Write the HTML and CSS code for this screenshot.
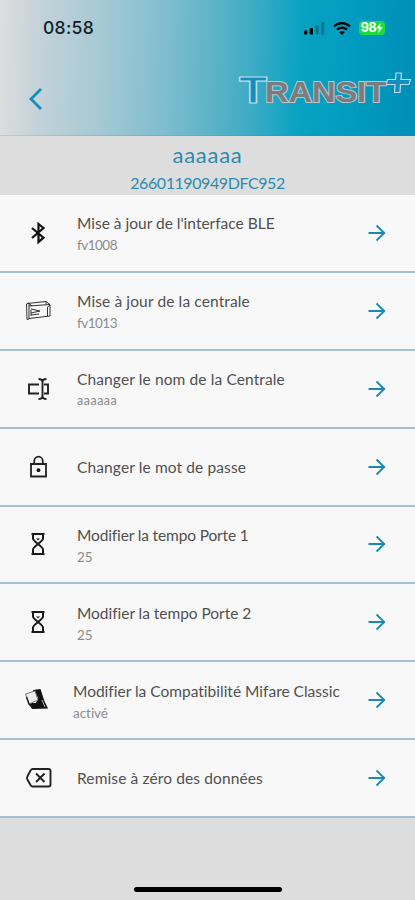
FILE: index.html
```html
<!DOCTYPE html>
<html lang="fr">
<head>
<meta charset="utf-8">
<meta name="viewport" content="width=device-width, initial-scale=1">
<title>Transit+</title>
<link rel="stylesheet" href="styles.css">
</head>
<body>
<svg width="0" height="0" class="defs" aria-hidden="true">
  <symbol id="arrow" viewBox="0 0 18 18"><path d="M.5 9H16M8.500 1.500L16.300 9L8.500 16.500" fill="none" stroke="currentColor" stroke-width="1.8"/></symbol>
  <symbol id="hourglass" viewBox="0 0 28 28"><path d="M7.500 4H20.500M7.500 24H20.500M9 4V8.500Q9 10 14 14Q19 18 19 19.500V24M19 4V8.500Q19 10 14 14Q9 18 9 19.500V24" fill="none" stroke="currentColor" stroke-width="2"/><path d="M12 8.500H16L14 10.600Z" fill="currentColor"/></symbol>
</svg>
<div class="screen">
  <header class="header">
    <div class="status">
      <span class="time">08:58</span>
      <div class="indicators">
        <svg width="21" height="13" viewBox="0 0 21 13"><rect x="0" y="8.5" width="3.3" height="4" rx="1"/><rect x="5.7" y="6" width="3.3" height="6.5" rx="1"/><g opacity=".25"><rect x="11.4" y="3" width="3.3" height="9.5" rx="1"/><rect x="17" y="0" width="3.3" height="12.5" rx="1"/></g></svg>
        <svg class="wifi" width="18" height="13" viewBox="0 0 18 13"><g fill="none" stroke="#000" stroke-width="2.3"><path d="M1 4.4Q9-2.2 17 4.4"/><path d="M4 7.7Q9 3.6 14 7.7"/></g><path d="M6.2 10Q9 8 11.8 10L9 13Z"/></svg>
        <span class="battery">98<svg width="7" height="10" viewBox="0 0 7 10"><path d="M4.7 0L0 5.5H3L2.2 10L7 4.3H4Z" fill="#fff"/></svg></span>
      </div>
    </div>
    <div class="nav">
      <svg class="back" width="16" height="24" viewBox="0 0 16 24"><path d="M13 2L3 12L13 22" fill="none" stroke="#178dbb" stroke-width="2.8"/></svg>
      <svg class="logo" width="177" height="40" viewBox="0 0 177 40">
        <g class="logo-blue">
          <text x="1" y="34.500" font-size="37" textLength="28" lengthAdjust="spacingAndGlyphs">T</text>
          <path d="M158 5H163.500L163 11.500H172.500L171 16.500H162.500L162 24.500H156.500L157 16.500H148L149.500 11.500H157.500Z"/>
        </g>
        <text class="logo-grey" x="27" y="34" font-size="30" textLength="121" lengthAdjust="spacingAndGlyphs">RANSIT</text>
      </svg>
    </div>
  </header>
  <section class="device">
    <h1 class="name">aaaaaa</h1>
    <p class="serial">26601190949DFC952</p>
  </section>
  <main class="list">
    <div class="row">
      <svg class="icon" viewBox="0 0 28 28"><path d="M8 9L19.500 18.700L14.500 23V5L19.500 9L8 19" fill="none" stroke="#111" stroke-width="2.2"/></svg>
      <div class="text double"><span class="title">Mise à jour de l'interface BLE</span><span class="sub version">fv1008</span></div>
      <svg class="go"><use href="#arrow"/></svg>
    </div>
    <div class="row">
      <svg class="icon" viewBox="0 0 28 28"><g fill="none" stroke="#333" stroke-width="1"><path d="M2.500 7L5 6V22L3 22.500Z"/><path d="M5 9L26 7.500V19L5 21.500M3 6.500L22 4.500L26 7.500M5 6.500L8 9M22 4.500V7.500M26 8L23.500 10V19"/><path d="M7 12L16 14L7 16M7 18L15 17M7 13V19"/></g></svg>
      <div class="text double"><span class="title looser">Mise à jour de la centrale</span><span class="sub version">fv1013</span></div>
      <svg class="go"><use href="#arrow"/></svg>
    </div>
    <div class="row">
      <svg class="icon" viewBox="0 0 28 28"><path d="M15 9.500H5V18.500H15M20 9.500H24V18.500H20M14.500 4Q18.500 4 18.500 7V21Q18.500 24 14.500 24M22.500 4Q18.500 4 18.500 7M22.500 24Q18.500 24 18.500 21" fill="none" stroke="#222" stroke-width="1.9"/></svg>
      <div class="text double"><span class="title looser">Changer le nom de la Centrale</span><span class="sub small">aaaaaa</span></div>
      <svg class="go"><use href="#arrow"/></svg>
    </div>
    <div class="row">
      <svg class="icon" viewBox="0 0 28 28"><path d="M7 11H22V23.500H7ZM10.200 11V8.500A4.300 4.800 0 0 1 18.800 8.500V11" fill="none" stroke="#222" stroke-width="1.8"/><circle cx="14.500" cy="17.200" r="1.900" fill="#111"/></svg>
      <div class="text"><span class="title looser">Changer le mot de passe</span></div>
      <svg class="go"><use href="#arrow"/></svg>
    </div>
    <div class="row">
      <svg class="icon"><use href="#hourglass"/></svg>
      <div class="text double"><span class="title tighter">Modifier la tempo Porte 1</span><span class="sub">25</span></div>
      <svg class="go"><use href="#arrow"/></svg>
    </div>
    <div class="row">
      <svg class="icon"><use href="#hourglass"/></svg>
      <div class="text double"><span class="title tight">Modifier la tempo Porte 2</span><span class="sub">25</span></div>
      <svg class="go"><use href="#arrow"/></svg>
    </div>
    <div class="row wide">
      <svg class="icon" viewBox="0 0 28 28"><path d="M9 4L16.500 3L20 14L24 22.500L8 23L5 17L12 17L14 12Z" fill="#111"/><path d="M1.500 8L11 5L14 14L5 18Z" fill="#eee" stroke="#777" stroke-width="1"/><path d="M2.500 11L5 18L9 22" fill="none" stroke="#222" stroke-width="1.500"/><path d="M18 14L21 21" stroke="#bbb" stroke-width="1"/></svg>
      <div class="text double"><span class="title">Modifier la Compatibilité Mifare Classic</span><span class="sub tight">activé</span></div>
      <svg class="go"><use href="#arrow"/></svg>
    </div>
    <div class="row">
      <svg class="icon" viewBox="0 0 28 28"><path d="M8.500 5H24.500Q26.500 5 26.500 7V20.500Q26.500 22.500 24.500 22.500H8.500Q7.500 22.500 6.500 21L3.500 15.700Q2.500 13.900 3.500 12.200L6.500 6.500Q7.500 5 8.500 5ZM12 9.500L20.500 18M20.500 9.500L12 18" fill="none" stroke="#222" stroke-width="1.900"/></svg>
      <div class="text"><span class="title looser">Remise à zéro des données</span></div>
      <svg class="go"><use href="#arrow"/></svg>
    </div>
  </main>
  <footer class="footer"><div class="home"></div></footer>
</div>
</body>
</html>
```
FILE: styles.css
```css
* { box-sizing: border-box; }
body { margin: 0; background: #ddd; font-family: Lato, "Liberation Sans", sans-serif; font-variant-ligatures: none; }
.defs { display: block; }
.screen { width: 415px; height: 900px; display: flex; flex-direction: column; overflow: hidden; }
.header {
  height: 135.500px; flex: none;
  background: linear-gradient(92deg, #dedede 0%, #c3d2d9 10%, #a9cad4 23%, #84bfd1 38%, #64b5c8 49%, #3cabc5 61%, #08a3c2 72%, #009bbf 85%, #008fb7 100%);
  border-bottom: 1px solid rgba(70, 120, 140, .2);
}
.status { height: 56px; display: flex; align-items: center; justify-content: space-between; padding: 0 30px 0 43px; }
.time { font: 500 17.500px/20px Inter, sans-serif; color: #10202a; letter-spacing: .3px; }
.indicators { display: flex; align-items: center; }
.wifi { margin: 0 8px 0 8px; }
.battery { display: flex; align-items: center; justify-content: center; width: 26px; height: 14px; border-radius: 4px; background: #1bdc3f; color: #fff; font: 700 12.500px/14px Inter, sans-serif; letter-spacing: -.5px; }
.nav { display: flex; justify-content: space-between; padding: 12px 0 0 28px; }
.back { margin-top: 19px; }
.logo { overflow: visible; font-family: "Liberation Sans", sans-serif; }
.logo-blue { fill: #128fbc; stroke: #bcdcec; stroke-width: 1.200px; }
.logo-blue text { font-weight: 700; }
.logo-grey { fill: #7b7c80; stroke: #c0c4c8; stroke-width: 2px; font-weight: 700; paint-order: stroke; }
.device { height: 59px; flex: none; text-align: center; color: #2c8bb0; }
.name { margin: 0; padding-top: 6px; font-size: 22px; line-height: 26px; font-weight: 400; letter-spacing: .7px; }
.serial { margin: 0; padding-top: 5px; font-size: 16px; line-height: 20px; letter-spacing: -.42px; }
.row { display: flex; align-items: center; height: 77.850px; background: #f8f8f8; border-bottom: 2px solid #a6c0d2; padding: 0 29px 0 24px; }
.row:first-child { height: 78.500px; }
.icon { width: 28px; height: 28px; color: #1a1a1a; flex: none; }
.text { flex: 1; display: flex; flex-direction: column; padding-left: 25px; white-space: nowrap; }
.double { padding-top: 3px; }
.wide .text { padding-left: 21px; }
.title { font-size: 15.500px; line-height: 22px; color: #505050; align-self: flex-start; }
.looser { letter-spacing: .12px; }
.tight { letter-spacing: -.04px; }
.tighter { letter-spacing: -.14px; }
.sub { font-size: 13.500px; line-height: 22px; color: #8c8c8c; align-self: flex-start; }
.version { letter-spacing: -.5px; }
.small { font-size: 12.500px; letter-spacing: .5px; }
.go { width: 18px; height: 18px; color: #178ab0; flex: none; }
.footer { flex: 1; display: flex; align-items: flex-end; justify-content: center; padding-bottom: 8px; }
.home { width: 148px; height: 5px; border-radius: 3px; background: #000; }
```
